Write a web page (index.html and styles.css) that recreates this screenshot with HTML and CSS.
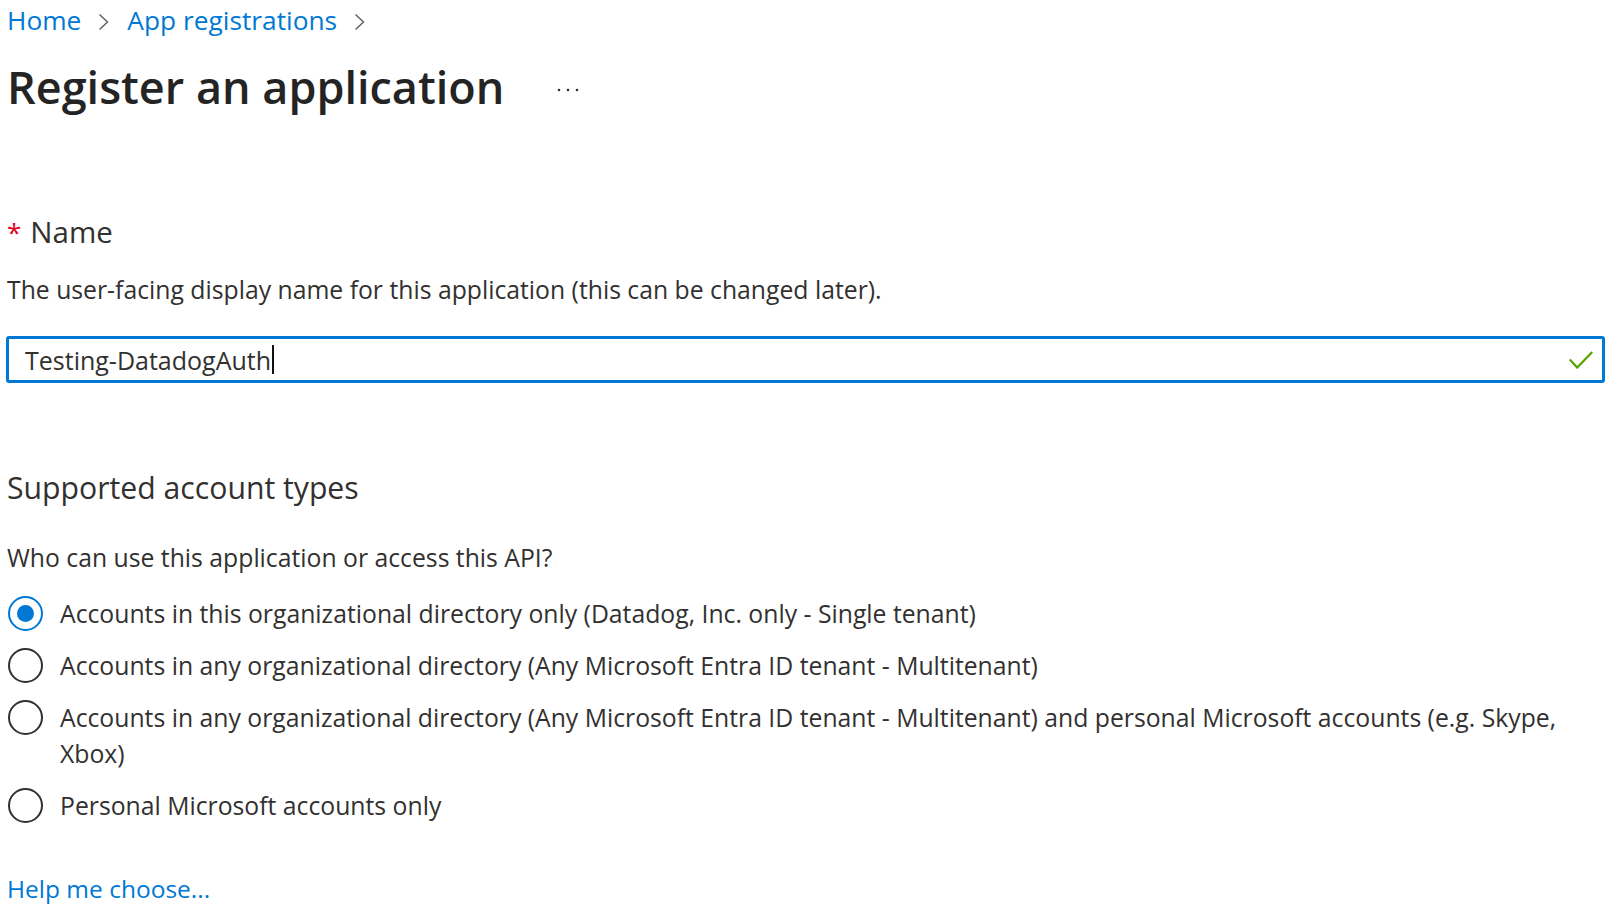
FILE: index.html
```html
<!DOCTYPE html>
<html lang="en">
<head>
<meta charset="utf-8">
<title>Register an application</title>
<link rel="stylesheet" href="styles.css">
</head>
<body>
<div class="page">
  <nav class="breadcrumb">
    <a class="crumb" href="#">Home</a>
    <svg class="chev" viewBox="0 0 12 18" aria-hidden="true"><path d="M1.5 1.5 L9.5 9 L1.5 16.5"/></svg>
    <a class="crumb" href="#">App registrations</a>
    <svg class="chev" viewBox="0 0 12 18" aria-hidden="true"><path d="M1.5 1.5 L9.5 9 L1.5 16.5"/></svg>
  </nav>

  <div class="title-row">
    <h1 class="title">Register an application</h1>
    <svg class="more" viewBox="0 0 24 6" aria-hidden="true"><circle cx="3" cy="3" r="1.3"/><circle cx="12" cy="3" r="1.3"/><circle cx="21" cy="3" r="1.3"/></svg>
  </div>

  <div class="field-label"><span class="req">*</span><span>Name</span></div>
  <p class="desc">The user-facing display name for this application (this can be changed later).</p>
  <div class="input">
    <span class="input-text">Testing-DatadogAuth</span><span class="caret"></span>
    <svg class="check" viewBox="0 0 24 18" aria-hidden="true"><path d="M0.8 8.6 L8.2 16.6 L23.2 1"/></svg>
  </div>

  <h2 class="section-title">Supported account types</h2>
  <p class="question">Who can use this application or access this API?</p>

  <div class="radio-list">
    <div class="radio-row">
      <span class="radio checked"></span>
      <span class="radio-label">Accounts in this organizational directory only (Datadog, Inc. only - Single tenant)</span>
    </div>
    <div class="radio-row">
      <span class="radio"></span>
      <span class="radio-label">Accounts in any organizational directory (Any Microsoft Entra ID tenant - Multitenant)</span>
    </div>
    <div class="radio-row">
      <span class="radio"></span>
      <span class="radio-label">Accounts in any organizational directory (Any Microsoft Entra ID tenant - Multitenant) and personal Microsoft accounts (e.g. Skype, Xbox)</span>
    </div>
    <div class="radio-row">
      <span class="radio"></span>
      <span class="radio-label">Personal Microsoft accounts only</span>
    </div>
  </div>

  <a class="help" href="#">Help me choose...</a>
</div>
</body>
</html>
```

FILE: styles.css
```css
* { box-sizing: border-box; }
html, body { margin: 0; padding: 0; background: #ffffff; }
body {
  font-family: "Open Sans", "Noto Sans", "Liberation Sans", sans-serif;
  color: #323130;
}
.page {
  width: 1618px;
  padding: 0 13px 0 6px;
  display: flex;
  flex-direction: column;
  align-items: stretch;
}
.breadcrumb {
  display: flex;
  align-items: center;
  height: 39px;
  padding-top: 1px;
  font-size: 26.3px;
  line-height: 38px;
}
.crumb { color: #0078d4; text-decoration: none; margin-left: 1px; }
.chev {
  width: 12px; height: 18px;
  margin: 4px 16px 0 17px;
  fill: none; stroke: #605e5c; stroke-width: 1.4;
}
.title-row {
  display: flex;
  align-items: center;
  margin-top: 20px;
  height: 56px;
}
.title {
  margin: 0 0 0 1px;
  font-size: 45px;
  font-weight: 600;
  line-height: 56px;
  color: #242424;
}
.more { width: 24px; height: 6px; margin: 6px 0 0 52px; fill: #323130; }
.field-label {
  margin-top: 97px;
  font-size: 29.5px;
  line-height: 40px;
  display: flex;
}
.req { color: #e3001b; font-size: 26px; margin: 0 9px 0 1px; }
.desc { margin: 20px 0 0 1px; font-size: 24.75px; line-height: 36px; }
.input {
  margin-top: 28px;
  height: 47px;
  border: 3px solid #0078d4;
  border-radius: 3px;
  display: flex;
  align-items: center;
  padding: 0 9px 0 16px;
}
.input-text { font-size: 25px; line-height: 36px; color: #323130; }
.caret { width: 2px; height: 29px; background: #111; margin-left: 1px; }
.check {
  width: 24px; height: 18px; margin-left: auto;
  fill: none; stroke: #57a300; stroke-width: 2.2;
}
.section-title {
  margin: 85px 0 0 1px;
  font-size: 30.2px;
  font-weight: 400;
  line-height: 40px;
}
.question { margin: 32px 0 0 1px; font-size: 24.75px; line-height: 36px; }
.radio-list {
  margin-top: 20px;
  display: flex;
  flex-direction: column;
  gap: 16px;
}
.radio-row {
  display: flex;
  align-items: flex-start;
  font-size: 24.75px;
  line-height: 36px;
}
.radio {
  flex: none;
  width: 35px; height: 35px;
  margin: 0 17px 0 2px;
  border: 2px solid #323130;
  border-radius: 50%;
  display: flex;
  align-items: center;
  justify-content: center;
}
.radio.checked { border-color: #0078d4; }
.radio.checked::after {
  content: "";
  width: 17px; height: 17px;
  border-radius: 50%;
  background: #0078d4;
}
.radio-label { flex: 1; }
.help {
  margin: 47px 0 0 1px;
  align-self: flex-start;
  font-size: 24.5px;
  line-height: 36px;
  color: #0078d4;
  text-decoration: none;
}
```
